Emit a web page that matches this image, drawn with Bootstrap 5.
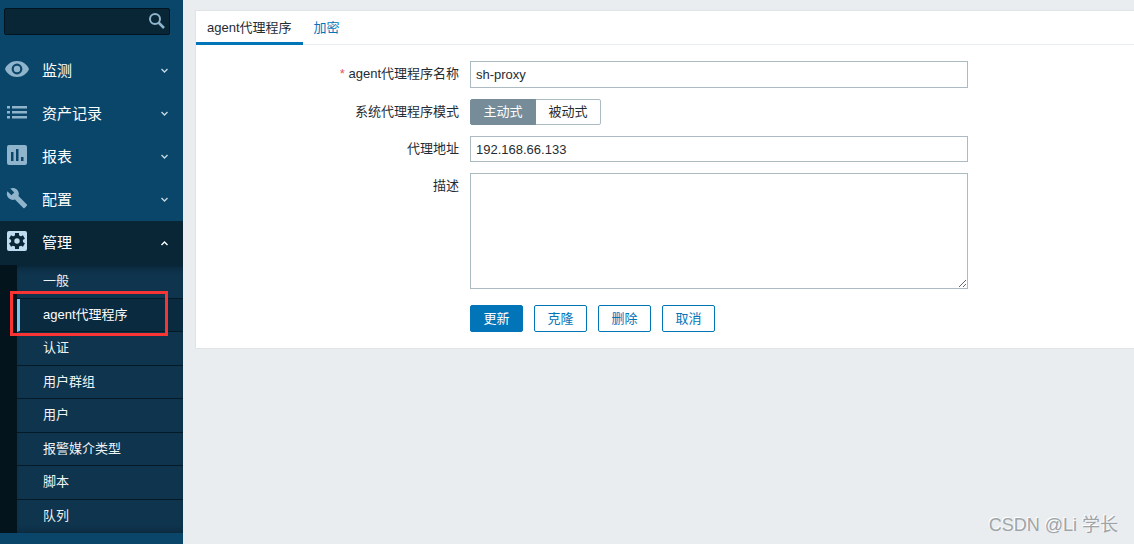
<!DOCTYPE html>
<html lang="zh-CN">
<head>
<meta charset="utf-8">
<meta name="viewport" content="width=device-width, initial-scale=1">
<title>agent代理程序</title>
<link href="https://cdn.jsdelivr.net/npm/bootstrap@5.3.0/dist/css/bootstrap.min.css" rel="stylesheet">
<style>
body{font:13px/20px "Liberation Sans","Noto Sans CJK SC",sans-serif;color:#1f2c33;background:#e9edf0}
.sidebar{width:183px;background:#0a466a}
.search-box{height:27px;margin:8px 13px 14px 4px}
.search-box .form-control{height:27px;background:#092636;border:1px solid #02141f;border-radius:2px;color:#fff;font-size:13px;padding:0 28px 0 6px}
.search-box .btn{width:27px;height:25px;color:#8fb4cc}
.menu-item{height:43px;color:#fff;font-size:15px;padding:0 14px 0 6px;text-decoration:none}
.menu-item .menu-icon{width:24px;height:24px;margin:0 13px 4px -1px;fill:#8fb4cc}
.menu-item .chevron{width:9px;height:9px;stroke:#c4d6e1;stroke-width:1.4;fill:none}
.menu-item.open{height:44px;background:#092636}
.menu-item.open .menu-icon{fill:#bddcf0}
.submenu{height:268px;grid-auto-rows:1fr;border-left:17px solid #04141d;background:#0f344d;box-shadow:inset 0 8px 6px -6px #08202f,inset 0 -6px 6px -6px #08202f}
.submenu a{display:flex;align-items:center;color:#eef3f6;text-decoration:none;padding-left:26px;border-bottom:1px solid #051a27}
.submenu li{display:grid;min-height:0}
.submenu li:last-child a{border-bottom:0}
.submenu a.current{background:#0a2b3f;color:#fff;border-left:3px solid #7cc3f0;padding-left:23px}
.highlight-frame{position:absolute;top:-8px;bottom:-4px;left:-7px;right:15px;border:3px solid #f93434;pointer-events:none}
.panel{background:#fff;border:1px solid #dfe4e7;border-right:0;margin:10px 0 0 12px}
.tabs{border-bottom:1px solid #ebeef0;height:34px}
.tabs a{color:#0275b8;text-decoration:none;padding:7px 11px;height:34px}
.tabs a.current{color:#1f2c33;border-bottom:3px solid #0275b8}
.form-body{padding:16px 0}
.form-line{display:flex;margin-bottom:11px}
.form-line>.caption{width:263px;margin-right:11px;padding-top:3px;text-align:right;flex:none}
.star{color:#e45959}
.field{flex:0 1 498px}
.field .form-control{border:1px solid #acbbc2;border-radius:0;font-size:13px;line-height:20px;color:#1f2c33;padding:2px 5px}
.field input.form-control{height:26px}
.field input.form-control.name-input{height:27px}
.field textarea.form-control{height:116px;min-height:0;resize:both}
.segments .btn{height:26px;width:66px;font-size:13px;line-height:20px;padding:2px 0;border:1px solid #acbbc2;border-radius:2px;color:#1f2c33;background:#fff}
.segments .btn-check:checked+.btn{background:#768d99;border-color:#768d99;color:#fff}
.actions{margin:16px 0 0 274px;gap:11px}
.actions .btn{width:53px;height:27px;font-size:13px;line-height:20px;padding:3px 0 2px;border:1px solid #0275b8;border-radius:2px;color:#0275b8;background:#fff}
.actions .btn.main{background:#0275b8;color:#fff}
.watermark{position:absolute;right:16px;bottom:5px;font-size:18px;line-height:28px;color:#a0a4a7;text-shadow:-1px -1px 0 #fff}
</style>
</head>
<body>
<div class="d-flex min-vh-100 position-relative">
<nav class="sidebar flex-shrink-0" aria-label="主菜单">
  <form class="search-box position-relative">
    <input class="form-control" type="text" aria-label="搜索">
    <button class="btn p-0 border-0 position-absolute top-0 end-0 d-flex align-items-center justify-content-center" type="button" aria-label="搜索">
      <svg width="18" height="18" viewBox="0 0 18 18" fill="none" stroke="currentColor"><circle cx="7" cy="7" r="5" stroke-width="2"/><path d="M10.500 10.500 16 16" stroke-width="2.500"/></svg>
    </button>
  </form>
  <a class="menu-item d-flex align-items-center" href="#"><svg class="menu-icon" viewBox="0 0 24 24"><path d="M12 4C6.500 4 1.800 7.300 0 12c1.800 4.700 6.500 8 12 8s10.200-3.300 12-8c-1.800-4.700-6.500-8-12-8zm0 13.400a5.400 5.400 0 1 1 0-10.800 5.400 5.400 0 0 1 0 10.800zm0-8.600a3.200 3.200 0 1 0 0 6.400 3.200 3.200 0 0 0 0-6.400z"/></svg>监测<svg class="chevron ms-auto" viewBox="0 0 9 9"><path d="M1.500 3 4.500 6 7.500 3"/></svg></a>
  <a class="menu-item d-flex align-items-center" href="#"><svg class="menu-icon" viewBox="0 0 24 24"><path d="M2 6h3v2.500H2zm5 0h15v2.500H7zM2 11h3v2.500H2zm5 0h15v2.500H7zM2 16h3v2.500H2zm5 0h15v2.500H7z"/></svg>资产记录<svg class="chevron ms-auto" viewBox="0 0 9 9"><path d="M1.500 3 4.500 6 7.500 3"/></svg></a>
  <a class="menu-item d-flex align-items-center" href="#"><svg class="menu-icon" viewBox="0 0 24 24"><path fill-rule="evenodd" d="M4 2h16a2 2 0 0 1 2 2v16a2 2 0 0 1-2 2H4a2 2 0 0 1-2-2V4a2 2 0 0 1 2-2zm2 7v9h2.500V9zm5-3v12h2.500V6zm5 8v4h2.500v-4z"/></svg>报表<svg class="chevron ms-auto" viewBox="0 0 9 9"><path d="M1.500 3 4.500 6 7.500 3"/></svg></a>
  <a class="menu-item d-flex align-items-center" href="#"><svg class="menu-icon" viewBox="-1 -1 26 26"><path d="M22.700 19l-9.100-9.100c.9-2.300.4-5-1.500-6.900-2-2-5-2.400-7.400-1.300L9 6 6 9 1.600 4.700C.4 7.100.9 10.100 2.900 12.100c1.900 1.900 4.600 2.400 6.900 1.500l9.100 9.100c.4.4 1 .4 1.400 0l2.300-2.300c.5-.4.5-1.100.1-1.400z"/></svg>配置<svg class="chevron ms-auto" viewBox="0 0 9 9"><path d="M1.500 3 4.500 6 7.500 3"/></svg></a>
  <a class="menu-item open d-flex align-items-center" href="#"><svg class="menu-icon" viewBox="0 0 24 24"><rect x="2" y="2" width="20" height="20" rx="2"/><g fill="#092636"><path d="M10 4h4v16h-4z"/><path d="M10 4h4v16h-4z" transform="rotate(60 12 12)"/><path d="M10 4h4v16h-4z" transform="rotate(120 12 12)"/><circle cx="12" cy="12" r="6"/></g><circle cx="12" cy="12" r="2.700"/></svg>管理<svg class="chevron ms-auto" viewBox="0 0 9 9"><path stroke="#fff" d="M1.500 6 4.500 3 7.500 6"/></svg></a>
  <ul class="submenu d-grid list-unstyled mb-0">
    <li><a href="#">一般</a></li>
    <li class="position-relative"><a class="current" href="#" aria-current="page">agent代理程序</a><span class="highlight-frame"></span></li>
    <li><a href="#">认证</a></li>
    <li><a href="#">用户群组</a></li>
    <li><a href="#">用户</a></li>
    <li><a href="#">报警媒介类型</a></li>
    <li><a href="#">脚本</a></li>
    <li><a href="#">队列</a></li>
  </ul>
</nav>
<main class="flex-grow-1">
  <div class="panel">
    <div class="tabs d-flex"><a class="current" href="#">agent代理程序</a><a href="#">加密</a></div>
    <form class="form-body">
      <div class="form-line"><label class="caption" for="name"><span class="star">*</span> agent代理程序名称</label><div class="field"><input class="form-control name-input" id="name" type="text" value="sh-proxy"></div></div>
      <div class="form-line" role="group" aria-labelledby="mode"><span class="caption" id="mode">系统代理程序模式</span><div class="btn-group segments">
        <input class="btn-check" type="radio" name="mode" id="active" checked><label class="btn" for="active">主动式</label>
        <input class="btn-check" type="radio" name="mode" id="passive"><label class="btn" for="passive">被动式</label></div></div>
      <div class="form-line"><label class="caption" for="address">代理地址</label><div class="field"><input class="form-control" id="address" type="text" value="192.168.66.133"></div></div>
      <div class="form-line"><label class="caption" for="description">描述</label><div class="field"><textarea class="form-control" id="description"></textarea></div></div>
      <div class="actions d-flex"><button class="btn main" type="button">更新</button><button class="btn" type="button">克隆</button><button class="btn" type="button">删除</button><button class="btn" type="button">取消</button></div>
    </form>
  </div>
</main>
<div class="watermark">CSDN @Li 学长</div>
</div>
<script src="https://cdn.jsdelivr.net/npm/bootstrap@5.3.0/dist/js/bootstrap.bundle.min.js"></script>
</body>
</html>
